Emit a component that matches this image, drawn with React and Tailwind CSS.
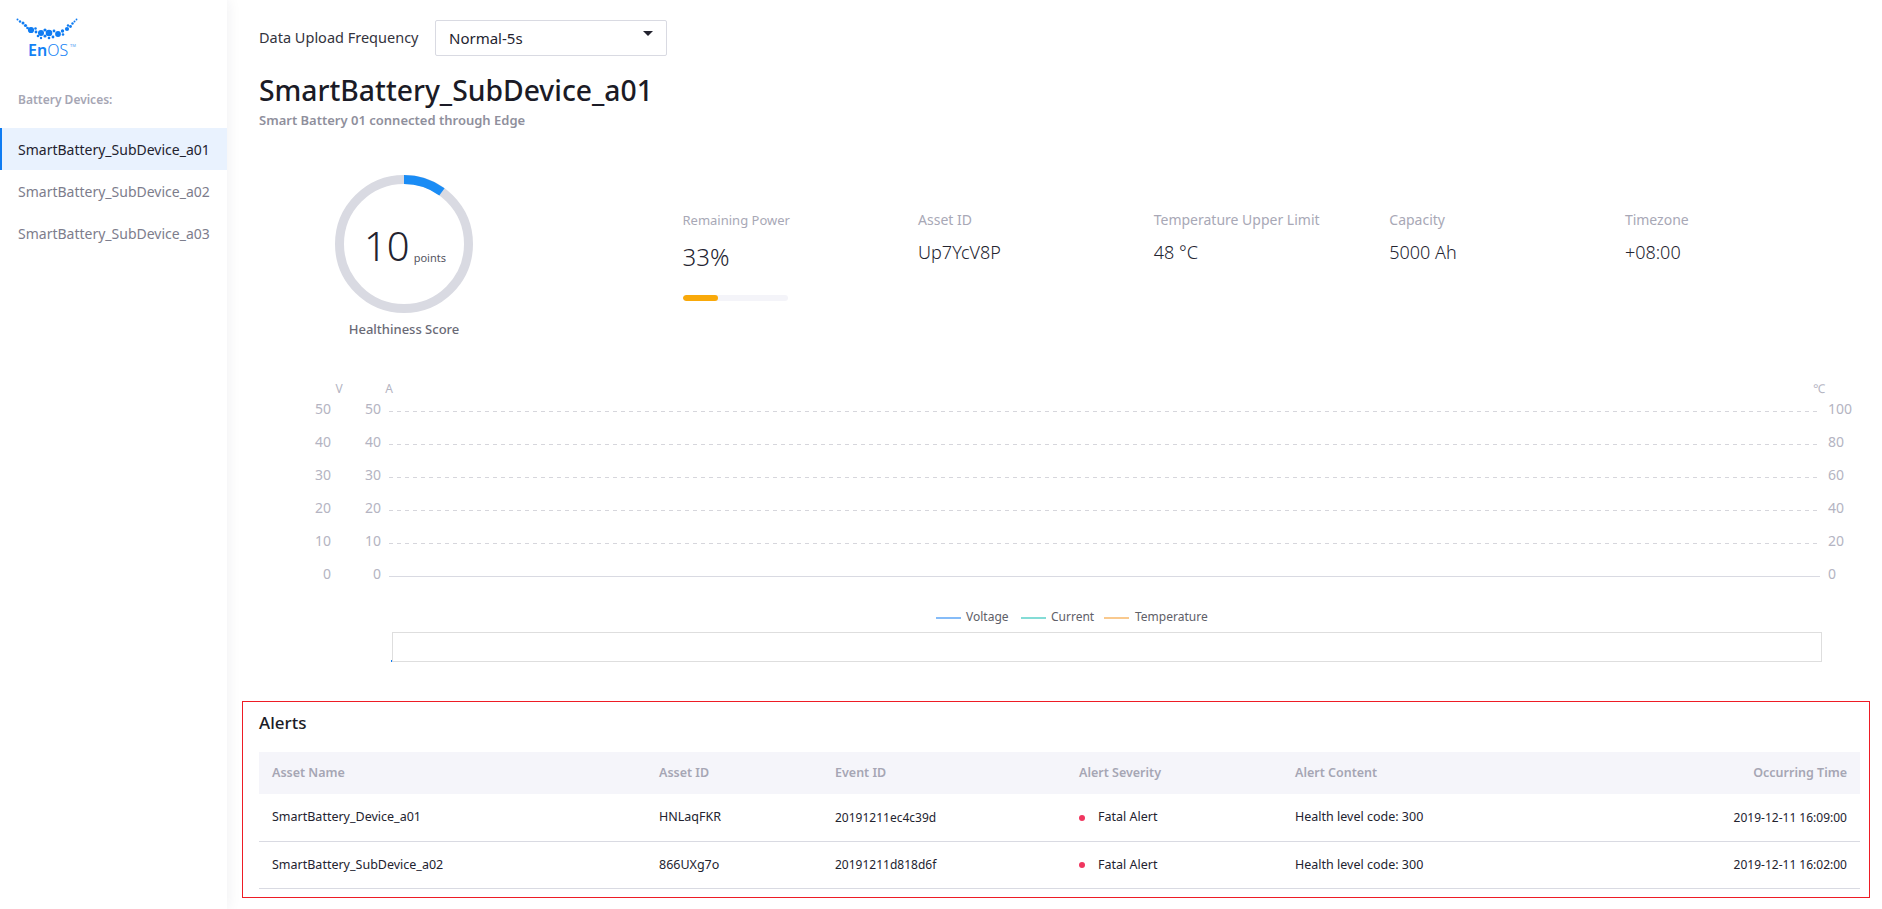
const FONT = "font-['Noto_Sans',sans-serif]";

const devices = ["SmartBattery_SubDevice_a01", "SmartBattery_SubDevice_a02", "SmartBattery_SubDevice_a03"];

const stats = [
  { label: "Asset ID", value: "Up7YcV8P" },
  { label: "Temperature Upper Limit", value: "48 °C" },
  { label: "Capacity", value: "5000 Ah" },
  { label: "Timezone", value: "+08:00" },
];

const alerts = [
  { name: "SmartBattery_Device_a01", asset: "HNLaqFKR", event: "20191211ec4c39d", time: "2019-12-11 16:09:00" },
  { name: "SmartBattery_SubDevice_a02", asset: "866UXg7o", event: "20191211d818d6f", time: "2019-12-11 16:02:00" },
];

const Logo = () => {
  const dots = [
    [17.5, 19.5, 1], [20, 21.5, 1.2], [23, 23, 1.5], [25.5, 25.5, 1.6], [27.5, 28, 1.3], [31, 30, 3.1], [35.5, 28.5, 1.3],
    [36, 32, 1.4], [41, 33, 3], [38, 36, 1.3], [45, 30, 1.6], [45, 36, 1.6], [41, 38, 1.2], [49, 33, 3.3], [53, 37, 1.4],
    [49, 38, 1.3], [58, 34, 2.9], [54, 31, 1.4], [62.5, 31, 1.7], [63, 34.5, 1.3], [67, 29, 2.1], [68, 25.5, 1.2], [70.5, 26.5, 1.4],
    [72.5, 23.5, 1.2], [74.5, 21.5, 1], [76.5, 19.5, 0.9],
  ];
  return (
    <svg width="90" height="60" viewBox="0 0 90 60" className="block" aria-hidden="true">
      {dots.map(([cx, cy, r], i) => (
        <circle key={i} cx={cx} cy={cy} r={r} fill="#0f7cf2" />
      ))}
    </svg>
  );
};

const Sidebar = () => (
  <aside className="w-[227px] shrink-0 bg-white shadow-[0_0_14px_rgba(40,40,70,0.08)] z-10">
    <div className="relative h-[64px]">
      <Logo />
      <div className="absolute left-[28px] top-[41px] text-[16px] leading-[18px] font-semibold text-[#1482f5]">
        En<span className="font-light">OS</span>
        <span className="absolute left-[42px] top-[3px] text-[4px] leading-[4px] text-[#7ab6f5]">TM</span>
      </div>
    </div>
    <div className="pl-[18px] mt-[28px] h-[36px] text-[12px] leading-[16px] font-semibold text-[#a6a6b4]">Battery Devices:</div>
    {devices.map((d, i) => (
      <div
        key={d}
        className={
          i === 0
            ? "h-[42px] flex items-center pl-[16px] border-l-2 border-[#0f7cf2] bg-[#e9f2fe] text-[14px] text-[#23232f]"
            : "h-[42px] flex items-center pl-[18px] text-[14px] text-[#7d7d8c]"
        }
      >
        {d}
      </div>
    ))}
  </aside>
);

const ScoreRing = () => (
  <div className="w-[188px] ml-[83px] mt-[10px] flex flex-col items-center">
    <div className="relative w-[138px] h-[138px]">
      <svg width="138" height="138" viewBox="0 0 138 138">
        <circle cx="69" cy="69" r="64.5" fill="none" stroke="#d9dae2" strokeWidth="9" />
        <circle
          cx="69"
          cy="69"
          r="64.5"
          fill="none"
          stroke="#1a8cf5"
          strokeWidth="9"
          strokeDasharray="40.5 400"
          transform="rotate(-90 69 69)"
        />
      </svg>
      <div className="absolute inset-0 flex items-center justify-center pl-[2px]">
        <span className="text-[40px] leading-[40px] font-light text-[#23232f] mt-[4px]">10</span>
        <span className="text-[11px] leading-[16px] text-[#55555f] self-end mb-[47px] ml-[4px]">points</span>
      </div>
    </div>
    <div className="mt-[7px] text-[13px] leading-[18px] font-medium text-[#6a6a76]">Healthiness Score</div>
  </div>
);

const StatRow = () => (
  <div className="flex ml-[184.5px] pt-[45px]">
    <div className="w-[235.6px]">
      <div className="text-[13px] leading-[20px] text-[#a8a8b6]">Remaining Power</div>
      <div className="mt-[11px] text-[24px] leading-[32px] font-light text-[#23232f]">33%</div>
      <div className="mt-[22px] w-[105px] h-[6px] rounded-full bg-[#f4f4f9] overflow-hidden">
        <div className="w-[35px] h-full rounded-full bg-[#f9a90a]" />
      </div>
    </div>
    {stats.map((s) => (
      <div key={s.label} className="w-[235.6px]">
        <div className="text-[14px] leading-[20px] text-[#a8a8b6]">{s.label}</div>
        <div className="mt-[9px] text-[18px] leading-[26px] font-light text-[#23232f]">{s.value}</div>
      </div>
    ))}
  </div>
);

const Chart = () => {
  const rows = [
    { y: 412.5, v: "50", a: "50", t: "100" },
    { y: 445.5, v: "40", a: "40", t: "80" },
    { y: 478.5, v: "30", a: "30", t: "60" },
    { y: 511.5, v: "20", a: "20", t: "40" },
    { y: 544.5, v: "10", a: "10", t: "20" },
    { y: 577.5, v: "0", a: "0", t: "0" },
  ];
  const legend = [
    { x: 936, label: "Voltage", color: "#86bcf8", tx: 966 },
    { x: 1021, label: "Current", color: "#84dcd6", tx: 1051 },
    { x: 1104, label: "Temperature", color: "#f9c98e", tx: 1135 },
  ];
  return (
    <svg width="1655" height="300" viewBox="227 370 1655 300" className="block">
      <g fontSize="14" fill="#b4b4c2">
        <text x="339" y="394" textAnchor="middle" fontSize="12">V</text>
        <text x="389" y="394" textAnchor="middle" fontSize="12">A</text>
        <text x="1819" y="394" textAnchor="middle" fontSize="12">℃</text>
        {rows.map((r) => (
          <g key={r.y}>
            <text x="331" y={r.y + 2} textAnchor="end">{r.v}</text>
            <text x="381" y={r.y + 2} textAnchor="end">{r.a}</text>
            <text x="1828" y={r.y + 2}>{r.t}</text>
            <line
              x1="389"
              x2={r.v === "0" ? 1820 : 1817}
              y1={r.y}
              y2={r.y}
              stroke={r.v === "0" ? "#d9dae2" : "#d6d6dc"}
              strokeDasharray={r.v === "0" ? undefined : "4 4"}
            />
          </g>
        ))}
      </g>
      {legend.map((l) => (
        <g key={l.label}>
          <line x1={l.x} x2={l.x + 25} y1="619" y2="619" stroke={l.color} strokeWidth="2" />
          <text x={l.tx} y="622" fontSize="12" fill="#606068">{l.label}</text>
        </g>
      ))}
      <rect x="392.5" y="633.5" width="1429" height="29" fill="none" stroke="#dedede" />
      <rect x="391" y="661" width="1" height="2" fill="#0f7cf2" />
    </svg>
  );
};

const AlertTable = () => (
  <section className="ml-[15px] mr-[12px] mt-[32px] h-[197px] border border-[#ee1c25] pl-[16px] pr-[9px]">
    <h2 className="pt-[10px] h-[50px] text-[17px] leading-[22px] font-medium text-[#1b1b26]">Alerts</h2>
    <table className="w-full table-fixed text-[12.5px]">
      <colgroup>
        <col className="w-[400px]" />
        <col className="w-[176px]" />
        <col className="w-[244px]" />
        <col className="w-[216px]" />
        <col />
        <col className="w-[200px]" />
      </colgroup>
      <thead>
        <tr className="h-[42px] bg-[#f5f5fa] text-[#a6a6b4] font-semibold">
          <th className="pl-[13px] text-left font-semibold">Asset Name</th>
          <th className="text-left font-semibold">Asset ID</th>
          <th className="text-left font-semibold">Event ID</th>
          <th className="text-left font-semibold">Alert Severity</th>
          <th className="text-left font-semibold">Alert Content</th>
          <th className="pr-[13px] text-right font-semibold">Occurring Time</th>
        </tr>
      </thead>
      <tbody className="text-[#23232f]">
        {alerts.map((a) => (
          <tr key={a.event} className="h-[47px] border-b border-[#d9dae2]">
            <td className="pl-[13px] pt-[1px]">{a.name}</td>
            <td className="pt-[1px]">{a.asset}</td>
            <td className="pt-[1px] text-[12px]">{a.event}</td>
            <td className="pt-[1px]">
              <span className="flex items-center">
                <span className="w-[6px] h-[6px] rounded-full bg-[#f0365f] mr-[13px]" />
                Fatal Alert
              </span>
            </td>
            <td className="pt-[1px]">Health level code: 300</td>
            <td className="pr-[13px] pt-[1px] text-right text-[12px]">{a.time}</td>
          </tr>
        ))}
      </tbody>
    </table>
  </section>
);

export default function App() {
  return (
    <div className={`${FONT} flex h-[909px] w-[1882px] overflow-hidden bg-white`}>
      <Sidebar />
      <main className="flex-1 min-w-0">
        <div className="pl-[32px] pt-[20px]">
          <div className="flex items-start">
            <span className="w-[176px] pt-[6px] text-[14.5px] leading-[22px] text-[#33333d]">Data Upload Frequency</span>
            <div className="relative w-[232px] h-[36px] border border-[#d9dae2] rounded-[2px] pl-[13px] flex items-center text-[15px] text-[#23232f]">
              Normal-5s
              <span className="absolute right-[13px] top-[10px] w-0 h-0 border-x-[5px] border-x-transparent border-t-[5px] border-t-[#23232f]" />
            </div>
          </div>
          <h1 className="mt-[15px] text-[28.3px] leading-[38px] font-medium text-[#1b1b26]">SmartBattery_SubDevice_a01</h1>
          <p className="mt-[2px] text-[13px] leading-[18px] font-semibold text-[#8f8f9c]">Smart Battery 01 connected through Edge</p>
        </div>
        <div className="flex mt-[36px] h-[166px]">
          <ScoreRing />
          <StatRow />
        </div>
        <div className="mt-[38px]">
          <Chart />
        </div>
        <AlertTable />
      </main>
    </div>
  );
}
